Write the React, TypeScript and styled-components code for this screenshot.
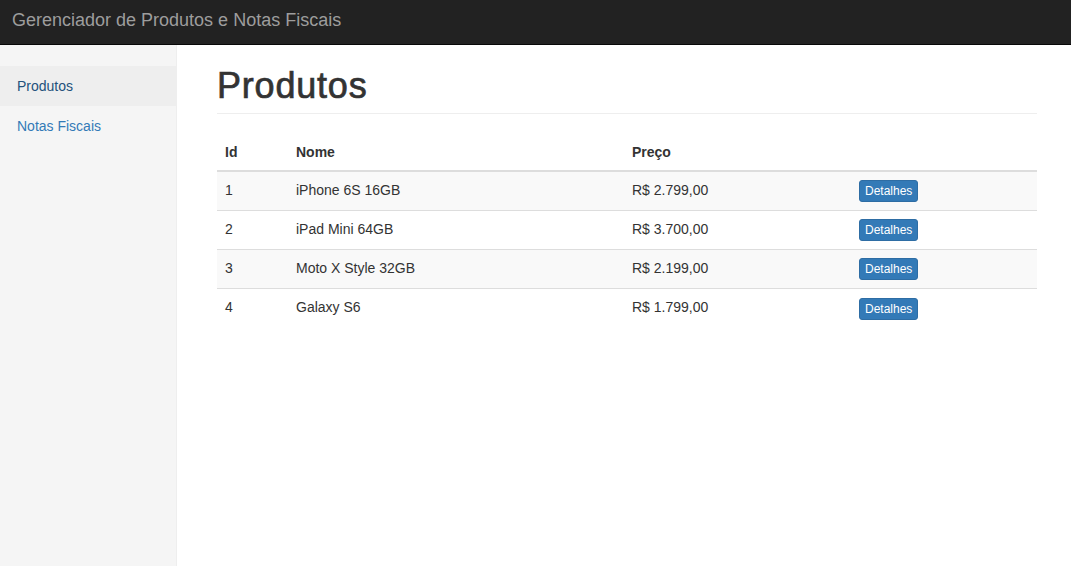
import React from "react";
import styled, { createGlobalStyle } from "styled-components";

const GlobalStyle = createGlobalStyle`
  html, body { margin: 0; padding: 0; height: 100%; }
  body {
    font-family: "Liberation Sans", Arial, Helvetica, sans-serif;
    font-size: 14px;
    line-height: 1.42857143;
    color: #333;
    background: #fff;
  }
  * { box-sizing: border-box; }
  #root { height: 100%; }
`;

const Page = styled.div`
  display: flex;
  flex-direction: column;
  height: 566px;
`;

const Navbar = styled.header`
  height: 45px;
  flex: 0 0 45px;
  background: #222;
  border-bottom: 1px solid #080808;
  display: flex;
  align-items: center;
  padding-left: 12px;
`;

const Brand = styled.a`
  color: #9d9d9d;
  font-size: 18px;
  line-height: 20px;
  text-decoration: none;
  margin-top: -5px;
`;

const Body = styled.div`
  display: flex;
  flex: 1;
  min-height: 0;
`;

const Sidebar = styled.nav`
  width: 177px;
  flex: 0 0 177px;
  background: #f5f5f5;
  border-right: 1px solid #eee;
  padding-top: 21px;
`;

const NavList = styled.ul`
  list-style: none;
  margin: 0;
  padding: 0;
`;

const NavLink = styled.a<{ $active?: boolean }>`
  display: block;
  height: 40px;
  padding: 10px 17px;
  line-height: 20px;
  color: ${(p) => (p.$active ? "#23527c" : "#337ab7")};
  text-decoration: none;
  background: ${(p) => (p.$active ? "#eee" : "transparent")};
`;

const Main = styled.main`
  flex: 1;
  padding: 20px 34px 20px 40px;
`;

const PageHeader = styled.h1`
  margin: 0 0 20px;
  padding: 2px 0 7px;
  border-bottom: 1px solid #eee;
  font-size: 36px;
  font-weight: 400;
  letter-spacing: 0.8px;
  -webkit-text-stroke: 0.7px #333;
  line-height: 38.6px;
  color: #333;
`;

const Table = styled.table`
  width: 100%;
  border-collapse: collapse;
  border-spacing: 0;
`;

const Th = styled.th<{ $w?: number }>`
  text-align: left;
  padding: 8px;
  line-height: 20px;
  font-weight: bold;
  border-bottom: 2px solid #ddd;
  vertical-align: bottom;
  width: ${(p) => (p.$w ? `${p.$w}px` : "auto")};
`;

const Tr = styled.tr<{ $striped?: boolean }>`
  background: ${(p) => (p.$striped ? "#f9f9f9" : "transparent")};
`;

const Td = styled.td`
  padding: 8px;
  line-height: 20px;
  border-top: 1px solid #ddd;
  vertical-align: top;
`;

const FirstRowTd = styled(Td)`
  border-top: 0;
`;

const Button = styled.button`
  display: inline-block;
  padding: 1px 5px;
  font-family: "Liberation Sans", Arial, Helvetica, sans-serif;
  font-size: 12px;
  line-height: 1.5;
  color: #fff;
  background: #337ab7;
  border: 1px solid #2e6da4;
  border-radius: 3px;
  cursor: pointer;
  vertical-align: middle;
`;

const products = [
  { id: 1, nome: "iPhone 6S 16GB", preco: "R$ 2.799,00" },
  { id: 2, nome: "iPad Mini 64GB", preco: "R$ 3.700,00" },
  { id: 3, nome: "Moto X Style 32GB", preco: "R$ 2.199,00" },
  { id: 4, nome: "Galaxy S6", preco: "R$ 1.799,00" },
];

export default function App() {
  return (
    <>
      <GlobalStyle />
      <Page>
        <Navbar>
          <Brand href="#">Gerenciador de Produtos e Notas Fiscais</Brand>
        </Navbar>
        <Body>
          <Sidebar>
            <NavList>
              <li>
                <NavLink href="#" $active>
                  Produtos
                </NavLink>
              </li>
              <li>
                <NavLink href="#">Notas Fiscais</NavLink>
              </li>
            </NavList>
          </Sidebar>
          <Main>
            <PageHeader>Produtos</PageHeader>
            <Table>
              <thead>
                <tr>
                  <Th $w={71}>Id</Th>
                  <Th $w={336}>Nome</Th>
                  <Th $w={227}>Preço</Th>
                  <Th></Th>
                </tr>
              </thead>
              <tbody>
                {products.map((p, i) => {
                  const Cell = i === 0 ? FirstRowTd : Td;
                  return (
                    <Tr key={p.id} $striped={i % 2 === 0}>
                      <Cell>{p.id}</Cell>
                      <Cell>{p.nome}</Cell>
                      <Cell>{p.preco}</Cell>
                      <Cell>
                        <Button>Detalhes</Button>
                      </Cell>
                    </Tr>
                  );
                })}
              </tbody>
            </Table>
          </Main>
        </Body>
      </Page>
    </>
  );
}
